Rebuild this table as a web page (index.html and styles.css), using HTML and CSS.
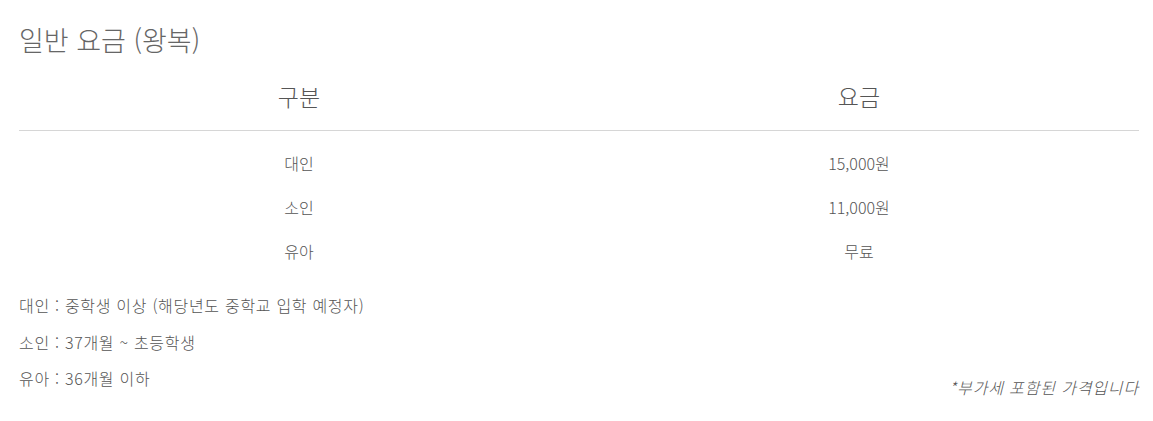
FILE: index.html
```html
<!DOCTYPE html>
<html lang="ko">
<head>
  <meta charset="UTF-8">
  <title>일반 요금 (왕복)</title>
  <link rel="stylesheet" href="styles.css">
</head>
<body>

  <div class="fare">
    <h2 class="fare-title">일반 요금 (왕복)</h2>

    <!-- 요금표 -->
    <table class="fare-table">
      <thead>
        <tr>
          <th>구분</th>
          <th>요금</th>
        </tr>
      </thead>
      <tbody>
        <tr>
          <td>대인</td>
          <td>15,000원</td>
        </tr>
        <tr>
          <td>소인</td>
          <td>11,000원</td>
        </tr>
        <tr>
          <td>유아</td>
          <td>무료</td>
        </tr>
      </tbody>
    </table>

    <!-- 안내 -->
    <div class="fare-foot">
      <ul class="fare-notes">
        <li>대인 : 중학생 이상 (해당년도 중학교 입학 예정자)</li>
        <li>소인 : 37개월 ~ 초등학생</li>
        <li>유아 : 36개월 이하</li>
      </ul>
      <p class="vat">*부가세 포함된 가격입니다</p>
    </div>
  </div>

</body>
</html>
```

FILE: styles.css
```css
body {
  margin: 0;
  font-family: "Noto Sans CJK KR", "Noto Sans", sans-serif;
  font-weight: 300;
  background: #fff;
  color: #555;
}

.fare {
  padding: 21px 14px 0 19px;
}

.fare-title {
  margin: 0;
  font-size: 27px;
  font-weight: 300;
  line-height: 38px;
  color: #666;
}

.fare-table {
  width: 100%;
  border-collapse: collapse;
  margin: 0;
}

.fare-table th {
  width: 50%;
  padding: 20px 0 17px;
  font-size: 23px;
  font-weight: 300;
  line-height: 34px;
  color: #555;
  border-bottom: 1px solid #d6d6d6;
}

.fare-table td {
  padding: 11px 0;
  font-size: 16px;
  line-height: 22px;
  text-align: center;
  color: #555;
}

.fare-table tbody tr:first-child td {
  padding-top: 21px;
}

.fare-foot {
  display: flex;
  justify-content: space-between;
  align-items: flex-end;
  margin-top: 21px;
}

.fare-notes {
  list-style: none;
  margin: 0;
  padding: 0;
}

.fare-notes li {
  font-size: 16px;
  line-height: 22px;
  letter-spacing: 0.7px;
  margin-bottom: 14.5px;
  color: #555;
}

.vat {
  margin: 0 0 6px;
  font-size: 16px;
  line-height: 22px;
  letter-spacing: 0.85px;
  font-style: italic;
  color: #555;
}
```
